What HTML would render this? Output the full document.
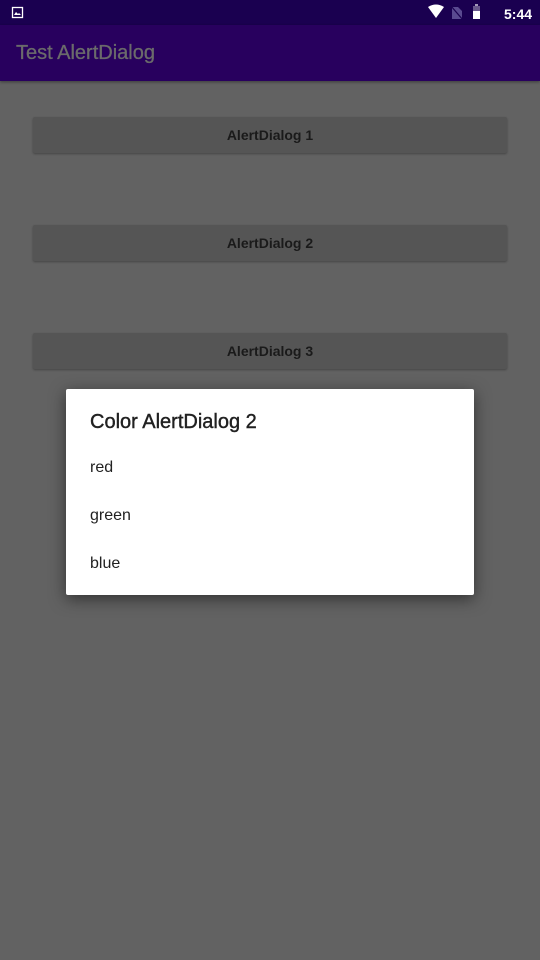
<!DOCTYPE html>
<html><head><style>
body{margin:0;width:540px;height:960px;background:#626262;font-family:"Liberation Sans",sans-serif;position:relative;overflow:hidden}
.sb{position:absolute;left:0;top:0;width:540px;height:25px;background:#1a0050}
.ab{position:absolute;left:0;top:25px;width:540px;height:56px;background:#28005e;box-shadow:0 1px 3px rgba(0,0,0,.4)}
.ab span{position:absolute;left:16px;top:17px;font-size:20px;color:#6b6b6b;-webkit-text-stroke:0.3px #6b6b6b}
.btn{position:absolute;left:33px;width:474px;height:36px;background:#555;border-radius:2px;box-shadow:0 1px 2px rgba(0,0,0,.3);text-align:center;line-height:36px;font-size:14px;font-weight:bold;color:#1a1a1a}
.dlg{position:absolute;left:66px;top:389px;width:408px;height:206px;background:#fff;border-radius:2px;box-shadow:0 4px 16px rgba(0,0,0,.5)}
.t{position:absolute;left:24px;top:22px;font-size:20px;color:#212121;-webkit-text-stroke:0.4px #212121}
.i{position:absolute;left:24px;font-size:16px;color:#212121}
</style></head><body>
<div class="sb">
<svg width="540" height="25" style="position:absolute;left:0;top:0">
<rect x="12.5" y="7.5" width="10" height="10" fill="none" stroke="#fff" stroke-width="1.3"/>
<path d="M14 15 L16 12 L18 14 L19 13 L21 15Z" fill="#fff"/>
<path d="M428 7 Q436 2 444 7 L436 18Z" fill="#fff"/>
<path d="M452 7 L458 7 L462 11 L462 19 L452 19Z" fill="#5a4a90"/>
<line x1="451" y1="6" x2="463" y2="20" stroke="#1a0050" stroke-width="1.2"/>
<rect x="473" y="6" width="7" height="13" fill="#fff" opacity=".35"/>
<rect x="473" y="11" width="7" height="8" fill="#fff"/>
<rect x="475" y="4" width="3" height="2" fill="#fff" opacity=".6"/>
<text x="504" y="19" font-size="14" font-weight="bold" fill="#fff" font-family="Liberation Sans">5:44</text>
</svg></div>
<div class="ab"><span>Test AlertDialog</span></div>
<div class="btn" style="top:117px">AlertDialog 1</div>
<div class="btn" style="top:225px">AlertDialog 2</div>
<div class="btn" style="top:333px">AlertDialog 3</div>
<div class="dlg">
<div class="t">Color AlertDialog 2</div>
<div class="i" style="top:70px">red</div>
<div class="i" style="top:118px">green</div>
<div class="i" style="top:166px">blue</div>
</div>
</body></html>
